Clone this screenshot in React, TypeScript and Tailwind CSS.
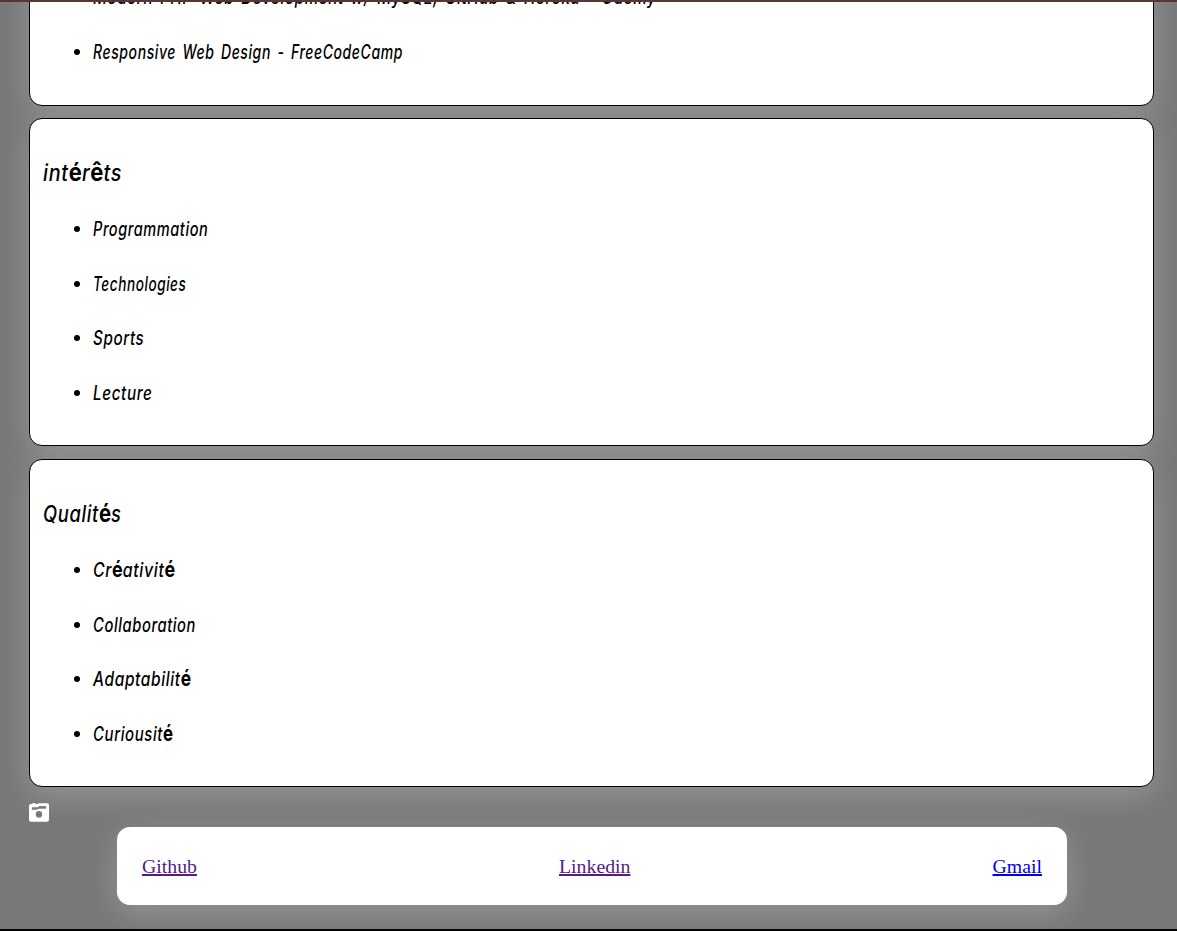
import { useLayoutEffect, useRef, useState } from "react";

type Item = { text: string; width: number };

function FittedText({ text, width, accent }: Item & { accent: string }) {
  const ref = useRef<HTMLSpanElement>(null);
  const [scale, setScale] = useState(1);
  useLayoutEffect(() => {
    if (ref.current) setScale((width + 0.3) / ref.current.offsetWidth);
  }, [text, width]);
  return (
    <span
      ref={ref}
      className="inline-block origin-left whitespace-nowrap tracking-[0.8px] [word-spacing:3px]"
      style={{ transform: `scaleX(${scale})` }}
    >
      {text.split(/([éê])/).map((part, i) =>
        part === "é" || part === "ê" ? (
          <span key={i} className={accent}>{part}</span>
        ) : (
          part
        ),
      )}
    </span>
  );
}

function List({ items }: { items: Item[] }) {
  return (
    <ul className="flex flex-col gap-[30.7px] pl-[63px]">
      {items.map((item) => (
        <li key={item.text} className="relative h-6 pt-px text-[19.5px] leading-6">
          <span className="absolute top-[10px] left-[-19px] size-[6px] rounded-full bg-black" />
          <FittedText {...item} accent="not-italic font-bold text-[22px] leading-none tracking-normal" />
        </li>
      ))}
    </ul>
  );
}

const card =
  "h-[328px] shrink-0 rounded-[13px] border border-black bg-white shadow-[0_8px_32px_rgba(255,255,255,0.22)]";

function Section({ title, items }: { title: Item; items: Item[] }) {
  return (
    <section className={card}>
      <h2 className="mt-[39px] mb-[28px] ml-[13px] h-[30px] text-[22.5px] leading-[30px]">
        <FittedText {...title} accent="not-italic font-bold text-[25px] leading-none tracking-normal" />
      </h2>
      <List items={items} />
    </section>
  );
}

export default function App() {
  return (
    <div className="flex h-[931px] flex-col overflow-hidden border-t-2 border-b-2 border-t-[#5a3532] border-b-black bg-[#787878] text-black">
      <main className="flex h-[785px] shrink-0 flex-col justify-end gap-[13px] pr-[23px] pl-[29px] font-['Inter',sans-serif] font-[550] italic [font-feature-settings:'cv11']">
        <section className={card + " -mb-px flex flex-col justify-end pb-[42.3px]"}>
          <List
            items={[
              { text: "Modern PHP Web Development w/ MySQL, GitHub & Heroku - Udemy", width: 563 },
              { text: "Responsive Web Design - FreeCodeCamp", width: 310 },
            ]}
          />
        </section>
        <Section
          title={{ text: "intérêts", width: 79 }}
          items={[
            { text: "Programmation", width: 115 },
            { text: "Technologies", width: 93 },
            { text: "Sports", width: 51 },
            { text: "Lecture", width: 59 },
          ]}
        />
        <Section
          title={{ text: "Qualités", width: 78 }}
          items={[
            { text: "Créativité", width: 82 },
            { text: "Collaboration", width: 103 },
            { text: "Adaptabilité", width: 98 },
            { text: "Curiousité", width: 80 },
          ]}
        />
      </main>
      <footer className="flex shrink-0 flex-col font-['Liberation_Serif',serif]">
        <svg className="mt-4 ml-[29px] h-[19px] w-[20px]" viewBox="0 0 21 19" preserveAspectRatio="none" fill="white" fillRule="evenodd">
          <path d="M2 1h1V.3h4V1H9L10 .3h9q2 0 2 2v14.5q0 2-2 2H2q-2 0-2-2V3q0-2 2-2Zm1 3.2v2.6h5L10 5.7h8V3h-7L9 4.2H3Zm7.5 3.7a3.4 3.4 0 1 0 0 6.8 3.4 3.4 0 0 0 0-6.8Z" />
        </svg>
        <nav className="mt-[5px] mr-[110px] ml-[117px] flex h-[78px] items-center justify-between rounded-[13px] bg-white px-[25px] pt-[2px] text-[19.8px] text-[#551a8b] shadow-[0_8px_32px_rgba(255,255,255,0.22)]">
          <a className="underline decoration-2 underline-offset-1" href="#github">Github</a>
          <a className="underline decoration-2 underline-offset-1" href="#linkedin">Linkedin</a>
          <a className="text-[#0000ee] underline decoration-2 underline-offset-1" href="#gmail">Gmail</a>
        </nav>
      </footer>
    </div>
  );
}
